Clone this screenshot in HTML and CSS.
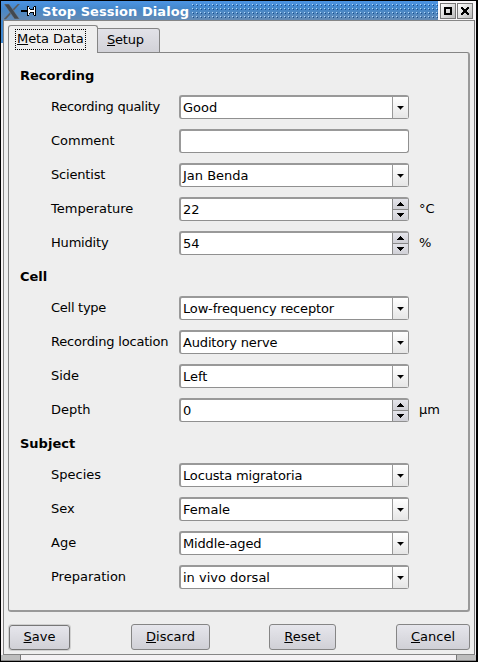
FILE: index.html
```html
<!DOCTYPE html>
<html lang="en">
<head>
<meta charset="utf-8">
<title>Stop Session Dialog</title>
<link rel="stylesheet" href="styles.css">
</head>
<body>
<div class="window">
  <header class="titlebar">
    <svg class="logo" width="16" height="16" viewBox="0 0 16 16"><path d="M14 0h1.500L2 15H0z" fill="#555" stroke="#666" stroke-width=".6"/><path d="M0 0h5l10.500 15h-5z" fill="#42484f" stroke="#7d8c9c" stroke-width=".5"/></svg>
    <svg class="pin" width="15" height="10" viewBox="0 0 15 10" shape-rendering="crispEdges"><path d="M0 4h6v2H0zM6 0h2v2h1v1h3V1h1V0h2v10h-2V9h-1V7H9v1H8v2H6z" fill="#000"/><path d="M7 1h1v2h1v1h4V1h1v8h-1V6H9v1H8v2H7z" fill="#fff"/></svg>
    <h1>Stop Session Dialog</h1>
    <div class="dots"></div>
    <div class="controls">
      <button aria-label="Maximize"><svg width="8" height="8" viewBox="0 0 8 8" shape-rendering="crispEdges"><path d="M1 1h6v6H1z" fill="none" stroke="#000" stroke-width="2"/></svg></button>
      <button aria-label="Close"><svg width="8" height="8" viewBox="0 0 8 8" shape-rendering="crispEdges"><path d="M0 0h2v1h1v1h2V1h1V0h2v2H7v1H6v2h1v1h1v2H6V7H5V6H3v1H2v1H0V6h1V5h1V3H1V2H0z"/></svg></button>
    </div>
  </header>
  <main class="client">
    <nav class="tabs">
      <div class="tab active"><span><u>M</u>eta Data</span></div>
      <div class="tab tight"><u>S</u>etup</div>
    </nav>
    <section class="panel">
      <h2>Recording</h2>
      <div class="row"><label class="tighter">Recording quality</label><div class="field">Good<i class="drop"></i></div></div>
      <div class="row"><label>Comment</label><div class="field"></div></div>
      <div class="row"><label class="tight">Scientist</label><div class="field">Jan Benda<i class="drop"></i></div></div>
      <div class="row"><label>Temperature</label><div class="field">22<i class="spin"><b class="up"></b><b class="down"></b></i></div><span>°C</span></div>
      <div class="row"><label class="tight">Humidity</label><div class="field">54<i class="spin"><b class="up"></b><b class="down"></b></i></div><span>%</span></div>
      <h2>Cell</h2>
      <div class="row"><label class="tighter">Cell type</label><div class="field tight">Low-frequency receptor<i class="drop"></i></div></div>
      <div class="row"><label class="tight">Recording location</label><div class="field tight">Auditory nerve<i class="drop"></i></div></div>
      <div class="row"><label>Side</label><div class="field">Left<i class="drop"></i></div></div>
      <div class="row"><label>Depth</label><div class="field">0<i class="spin"><b class="up"></b><b class="down"></b></i></div><span>µm</span></div>
      <h2>Subject</h2>
      <div class="row"><label>Species</label><div class="field tight">Locusta migratoria<i class="drop"></i></div></div>
      <div class="row"><label>Sex</label><div class="field">Female<i class="drop"></i></div></div>
      <div class="row"><label>Age</label><div class="field tight">Middle-aged<i class="drop"></i></div></div>
      <div class="row"><label>Preparation</label><div class="field">in vivo dorsal<i class="drop"></i></div></div>
    </section>
    <footer class="actions">
      <button class="save"><u>S</u>ave</button>
      <button class="discard"><u>D</u>iscard</button>
      <button class="reset"><u>R</u>eset</button>
      <button class="cancel"><u>C</u>ancel</button>
    </footer>
  </main>
  <div class="grip"><i></i><i></i></div>
</div>
</body>
</html>
```
FILE: styles.css
```css
* { box-sizing: border-box; }
body { margin: 0; font: 13px/16px "DejaVu Sans", sans-serif; color: #000; background: #000; }
.tight { letter-spacing: -.19px; }
.field.tight { letter-spacing: -.16px; }
.tighter { letter-spacing: -.27px; }
.window { width: 478px; height: 662px; border: 1px solid #000; border-right-width: 2px; display: flex; flex-direction: column; background: linear-gradient(#4087cf 0 42px, #f8f4f4 42px) 0 0 / 2px 653px no-repeat, #f4f2f4; }
.titlebar { height: 19px; flex: none; display: flex; align-items: center; background: linear-gradient(#4c94e4, #4487ca 40%, #648ab4); padding-left: 3px; }
.logo { margin-top: 2px; }
.pin { margin-left: 1px; }
h1 { margin: 3px 0 0 6px; font-size: 13px; line-height: 16px; color: #fff; white-space: nowrap; width: 150px; letter-spacing: .06px; }
.dots { width: 246px; height: 14px; margin-top: 1px; background: conic-gradient(from 270deg at 1px 1px, #b4d8fa 90deg, transparent 0) 0 0 / 4px 4px, conic-gradient(from 270deg at 1px 1px, #1c4e88 90deg, transparent 0) 1px 1px / 4px 4px; }
.controls { margin-left: auto; width: 38px; height: 19px; background: #f8f6f8; display: flex; gap: 1px; padding: 2px 0 0 2px; }
.controls button { width: 16px; height: 16px; padding: 0; border: 1px solid #777; background: linear-gradient(135deg, #fff, #bbb); display: grid; place-items: center; }
.client { flex: 1; min-height: 0; margin: 0 1px 0 2px; border: 1px solid #858585; border-right-color: #777; background: #eee; padding: 4px 4px 0 4px; }
.tabs { height: 27px; display: flex; align-items: flex-end; }
.tab { width: 62px; height: 25px; border: 1px solid #858585; border-left: 0; border-radius: 0 3px 0 0; background: linear-gradient(#e2e2e8, #d2d2d8); padding: 3px 0 0 9px; margin-bottom: -1px; }
.tab.active { width: 90px; height: 28px; border-left: 1px solid #858585; border-bottom: 0; border-radius: 3px 3px 0 0; background: #eee; padding: 3px 0 0 6px; position: relative; }
.tab span { display: block; width: 71px; height: 21px; border: 1px dotted #000; padding: 1px 0 0 1px; white-space: nowrap; letter-spacing: -.1px; }
.panel { height: 560px; border: 1px solid #858585; border-right-width: 2px; border-bottom-width: 2px; border-color: #858585 #999 #999 #858585; border-radius: 0 3px 3px 3px; padding: 15px 0 0 11px; }
h2 { margin: 0 0 11px; font-size: 13px; line-height: 16px; }
.row { display: flex; height: 24px; margin-bottom: 10px; padding-left: 31px; line-height: 24px; white-space: nowrap; }
.row + h2 { margin-top: 14px; }
label { width: 128px; }
.field { width: 230px; height: 24px; border: 2px solid #999; border-width: 2px 1px 1px 2px; border-color: #999 #909090 #909090 #999; border-radius: 3px; background: #fff; padding-left: 2px; line-height: 22px; display: flex; }
.field i { margin-left: auto; width: 16px; height: 21px; }
.drop { border-left: 1px solid #999; background: linear-gradient(#fff, #e6e6e6); display: grid; place-items: center; }
.drop::after, .spin b::after { content: ""; width: 7px; height: 4px; background: #000; clip-path: polygon(0 0, 7px 0, 7px 1px, 6px 1px, 6px 2px, 5px 2px, 5px 3px, 4px 3px, 4px 4px, 3px 4px, 3px 3px, 2px 3px, 2px 2px, 1px 2px, 1px 1px, 0 1px); }
.spin { border-left: 1px solid #888; display: flex; flex-direction: column; gap: 1px; background: #888; }
.spin b { flex: 1; display: grid; place-items: center; background: linear-gradient(#e4e4ea, #d0d0d6); }
.spin .up::after { transform: scaleY(-1); }
.row span { margin-left: 10px; }
.actions { display: flex; margin-top: 12px; }
.actions button { height: 26px; padding: 0; font: inherit; color: #000; border: 1px solid #858585; border-radius: 3px; background: linear-gradient(#e6e6ec, #d0d0d6); }
.actions .save { width: 61px; height: 25px; margin: 1px 61px 0 1px; padding-bottom: 2px; border-color: #777; box-shadow: 0 0 0 1px #d0d0d0; }
.discard { width: 79px; margin-right: 59px; }
.reset { width: 67px; margin-right: 60px; }
.cancel { width: 74px; }
.grip { height: 6px; flex: none; border-bottom: 1px solid #888; display: flex; justify-content: space-between; }
.grip i { width: 20px; background: #bebebe; border-right: 1px solid #777; }
.grip i + i { border-right: 0; border-left: 1px solid #777; }
```
